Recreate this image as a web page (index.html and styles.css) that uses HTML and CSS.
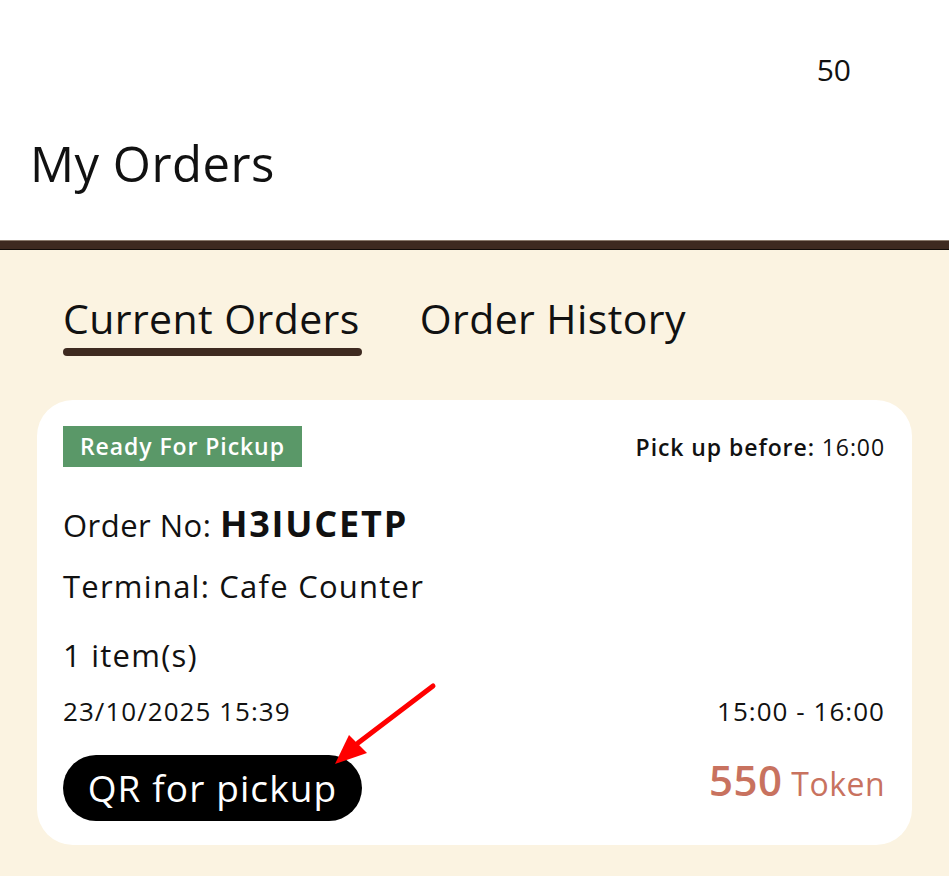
FILE: index.html
```html
<!DOCTYPE html>
<html>
<head>
<meta charset="utf-8">
<link rel="stylesheet" href="styles.css">
</head>
<body>
<div class="page">
  <header class="top">
    <div class="count">50</div>
    <h1 class="title">My Orders</h1>
  </header>
  <div class="band"></div>
  <main class="content">
    <nav class="tabs">
      <div class="tab active">Current Orders</div>
      <div class="tab">Order History</div>
    </nav>
    <section class="card">
      <div class="row row-top">
        <span class="badge">Ready For Pickup</span>
        <span class="before"><b>Pick up before:</b> 16:00</span>
      </div>
      <div class="order-no">Order No: <b>H3IUCETP</b></div>
      <div class="terminal">Terminal: Cafe Counter</div>
      <div class="items">1 item(s)</div>
      <div class="row row-date">
        <span>23/10/2025 15:39</span>
        <span>15:00 - 16:00</span>
      </div>
      <div class="row row-bottom">
        <button class="qr">QR for pickup</button>
        <span class="price"><b>550</b> Token</span>
      </div>
      <svg class="arrow" width="120" height="100" viewBox="0 0 120 100">
        <line x1="110" y1="6" x2="35" y2="63" stroke="#ff0000" stroke-width="5" stroke-linecap="round"/>
        <polygon points="12,84 26,55 44,73" fill="#ff0000"/>
      </svg>
    </section>
  </main>
</div>
</body>
</html>
```
FILE: styles.css
```css
* { box-sizing: border-box; }
html, body { margin: 0; padding: 0; }
body {
  width: 949px;
  height: 876px;
  overflow: hidden;
  background: #fbf3e1;
  font-family: "Open Sans", "Noto Sans", sans-serif;
  color: #111;
  letter-spacing: 0.03em;
}
.page { display: flex; flex-direction: column; height: 876px; }
.top {
  background: #fff;
  height: 240px;
  display: flex;
  flex-direction: column;
  padding: 0 30px;
}
.count {
  align-self: flex-end;
  margin-top: 52px;
  margin-right: 68px;
  font-size: 30px;
  font-weight: 500;
  line-height: 36px;
  letter-spacing: 0;
}
.title {
  margin: 45px 0 0 0;
  font-size: 49px;
  font-weight: 500;
  line-height: 60px;
  letter-spacing: 0.01em;
}
.band {
  height: 10px;
  background: #3e2a20;
  border-top: 1px solid #8a7a6c;
  border-bottom: 1px solid #120c08;
}
.content { padding: 0 37px; }
.tabs {
  display: flex;
  gap: 60px;
  padding: 42px 0 0 26px;
  height: 150px;
}
.tab {
  font-size: 41px;
  font-weight: 500;
  line-height: 52px;
  height: 59px;
  letter-spacing: 0.01em;
}
.tab.active {
  position: relative;
}
.tab.active::after {
  content: "";
  position: absolute;
  left: 0;
  right: -2px;
  bottom: -5px;
  height: 8px;
  border-radius: 4px;
  background: #3e2a20;
}
.card {
  position: relative;
  background: #fff;
  border-radius: 36px;
  width: 875px;
  height: 445px;
  padding: 26px 27px 0 26px;
}
.row {
  display: flex;
  justify-content: space-between;
  align-items: center;
}
.badge {
  background: #5a9868;
  color: #fff;
  font-size: 23px;
  font-weight: 600;
  padding: 0 17px;
  height: 41px;
  line-height: 41px;
  letter-spacing: 0.04em;
}
.before { font-size: 23px; letter-spacing: 0.04em; }
.before b { font-weight: 600; }
.order-no {
  margin-top: 36px;
  font-size: 31px;
  line-height: 42px;
}
.order-no b { font-size: 36px; font-weight: 700; letter-spacing: 0.05em; }
.terminal {
  margin-top: 19px;
  font-size: 31px;
  line-height: 42px;
  letter-spacing: 0.04em;
}
.items {
  margin-top: 27px;
  font-size: 31px;
  line-height: 42px;
  letter-spacing: 0.04em;
}
.row-date {
  margin-top: 19px;
  font-size: 26px;
  line-height: 32px;
  letter-spacing: 0.04em;
}
.row-bottom { margin-top: 24px; }
.qr {
  background: #000;
  color: #fff;
  border: none;
  border-radius: 33px;
  height: 66px;
  width: 299px;
  font-family: inherit;
  font-size: 37px;
  font-weight: 500;
  letter-spacing: 0.03em;
  padding: 0;
}
.price {
  color: #c8725f;
  font-size: 32px;
  padding-bottom: 16px;
}
.price b { font-size: 42px; font-weight: 600; }
.arrow {
  position: absolute;
  left: 286px;
  top: 280px;
}
```
